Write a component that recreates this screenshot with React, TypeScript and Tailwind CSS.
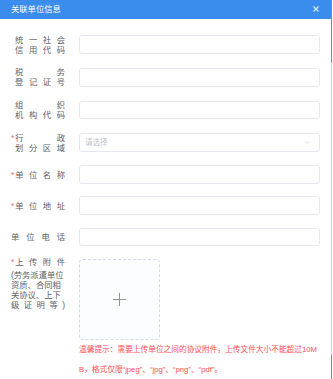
import { ChevronDown } from 'lucide-react';

type Line = string[];

const Label = ({ lines, indent = false, tall = false }: { lines: Line[]; indent?: boolean; tall?: boolean }) => (
    <div className={`w-[54px] shrink-0 text-[8.3px] text-[#606266] ${indent ? 'pl-[4px]' : ''}`}>
        {lines.map((line, i) => (
            <div key={i} className={`flex justify-between leading-[10px] ${tall && i === 0 ? 'mb-[3px]' : ''}`}>
                {line.map((ch, j) => (
                    <span key={j}>
                        {ch.startsWith('*') ? (
                            <>
                                <span className="text-[#f56c6c] pr-[1px]">*</span>
                                {ch.slice(1)}
                            </>
                        ) : (
                            ch
                        )}
                    </span>
                ))}
            </div>
        ))}
    </div>
);

const TextInput = () => (
    <div className="w-[241px] h-[18.7px] rounded-[3px] border border-[#e4e7ed] bg-white" />
);

export default function App() {
    return (
        <div className="w-[333px] h-[379px] overflow-hidden flex bg-white font-['Liberation_Sans','Noto_Sans_CJK_SC',sans-serif]">
            <div className="w-[331px] flex flex-col">
                {/* Header */}
                <div className="h-[21px] bg-[#3b8ded] flex items-center justify-between pl-[11px] pr-[12px]">
                    <span className="text-[8.3px] text-white">关联单位信息</span>
                    <svg width="6" height="6" viewBox="0 0 6 6" className="text-white/80">
                        <path d="M0.5 0.5 L5.5 5.5 M5.5 0.5 L0.5 5.5" stroke="currentColor" strokeWidth="1.1" />
                    </svg>
                </div>

                {/* Form */}
                <div className="flex flex-col gap-[12.6px] pt-[16px] pl-[11px]">
                    <div className="flex items-center gap-[14px]">
                        <Label indent lines={[['统', '一', '社', '会'], ['信', '用', '代', '码']]} />
                        <TextInput />
                    </div>
                    <div className="flex items-center gap-[14px]">
                        <Label indent lines={[['税', '务'], ['登', '记', '证', '号']]} />
                        <TextInput />
                    </div>
                    <div className="flex items-center gap-[14px]">
                        <Label indent lines={[['组', '织'], ['机', '构', '代', '码']]} />
                        <TextInput />
                    </div>
                    <div className="flex items-center gap-[14px]">
                        <div className="w-[54px] shrink-0 text-[8.3px] text-[#606266]">
                            <div className="flex justify-between leading-[10px]">
                                <span><span className="text-[#f56c6c] pr-[1px]">*</span>行</span>
                                <span>政</span>
                            </div>
                            <div className="flex justify-between leading-[10px] pl-[4px]">
                                <span>划</span><span>分</span><span>区</span><span>域</span>
                            </div>
                        </div>
                        <div className="w-[241px] h-[18.7px] rounded-[3px] border border-[#e4e7ed] bg-white flex items-center justify-between pl-[5px] pr-[8px]">
                            <span className="text-[7.5px] text-[#c0c4cc]">请选择</span>
                            <ChevronDown className="w-[7px] h-[7px] text-[#c0c4cc]" strokeWidth={2} />
                        </div>
                    </div>
                    <div className="flex items-center gap-[14px]">
                        <Label lines={[['*单', '位', '名', '称']]} />
                        <TextInput />
                    </div>
                    <div className="flex items-center gap-[14px]">
                        <Label lines={[['*单', '位', '地', '址']]} />
                        <TextInput />
                    </div>
                    <div className="flex items-center gap-[14px]">
                        <Label lines={[['单', '位', '电', '话']]} />
                        <TextInput />
                    </div>
                    <div className="flex items-start gap-[14px]">
                        <div className="mt-[-2px]">
                            <Label
                                tall
                                lines={[
                                    ['*上', '传', '附', '件'],
                                    ['(劳务派遣单位'],
                                    ['资质、合同相'],
                                    ['关协议、上下'],
                                    ['级', '证', '明', '等', ')'],
                                ]}
                            />
                        </div>
                        <div className="flex flex-col">
                            <div className="w-[81px] h-[81px] rounded-[4px] border border-dashed border-[#d3dbe7] bg-[#fbfdff] flex items-center justify-center">
                                <svg width="13" height="13" viewBox="0 0 13 13" className="text-[#8c939d]">
                                    <path d="M6.5 0 V13 M0 6.5 H13" stroke="currentColor" strokeWidth="1" />
                                </svg>
                            </div>
                            <div className="text-[7.7px] leading-[19.5px] text-[#ff4d4f] whitespace-nowrap">
                                <div>温馨提示：需要上传单位之间的协议附件，上传文件大小不能超过10M</div>
                                <div>B，格式仅限“jpeg”、“jpg”、“png”、“pdf”。</div>
                            </div>
                        </div>
                    </div>
                </div>
            </div>

            {/* Page edge */}
            <div className="w-[1px] flex flex-col">
                <div className="h-[63px] bg-[#5f8fcc]" />
                <div className="flex-1 bg-[#cfcfcf]" />
                <div className="h-[24px] bg-[#5f8fcc]" />
            </div>
            <div className="w-[1px] bg-white" />
        </div>
    );
}
